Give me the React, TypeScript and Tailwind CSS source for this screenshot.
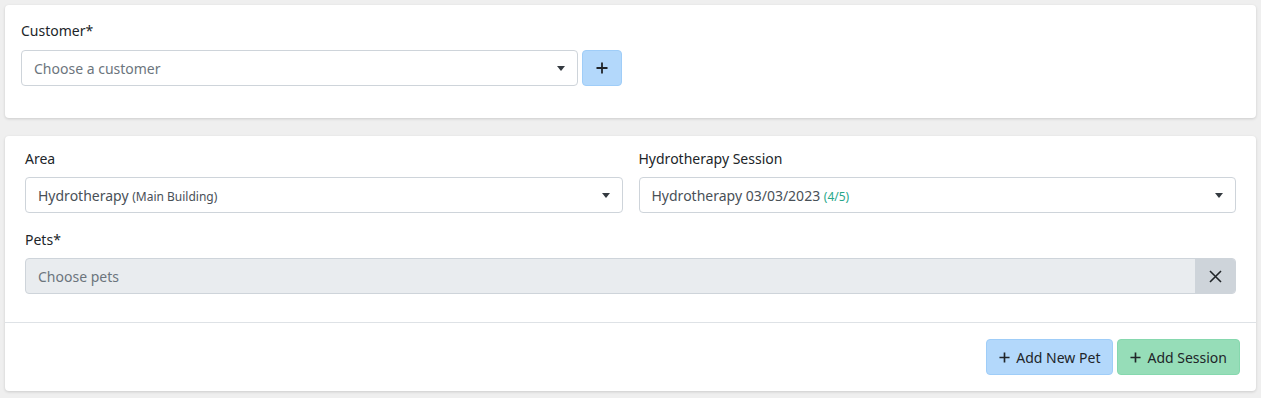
import React from 'react'

const Caret = () => (
    <svg width="8" height="5" viewBox="0 0 8 5" className="shrink-0">
        <path d="M0 0h8L4 5z" fill="#343a40" />
    </svg>
)

const Plus = ({ size = 12 }: { size?: number }) => (
    <svg width={size} height={size} viewBox="0 0 12 12" className="shrink-0">
        <path d="M6 0.5v11M0.5 6h11" stroke="#212529" strokeWidth="1.8" />
    </svg>
)

const Select = ({ children }: { children: React.ReactNode }) => (
    <div className="flex h-9 w-full items-center justify-between rounded border border-[#ced4da] bg-white pl-3 pr-3 text-[14px] text-[#495057]">
        <span>{children}</span>
        <Caret />
    </div>
)

const App = () => {
    return (
        <div
            className="min-h-[398px] bg-[#efefef] px-[5px] pt-[5px] text-[#212529]"
            style={{ fontFamily: '"Noto Sans", "Open Sans", sans-serif' }}
        >
            {/* Customer card */}
            <div className="rounded bg-white px-4 pt-4 pb-8 shadow-[0_1px_3px_rgba(0,0,0,0.15)]">
                <label className="block text-[14px] leading-5">Customer*</label>
                <div className="mt-[9px] flex gap-1">
                    <div className="w-[557px]">
                        <div className="flex h-9 w-full items-center justify-between rounded border border-[#ced4da] bg-white px-3 text-[14px] text-[#6c757d]">
                            <span>Choose a customer</span>
                            <Caret />
                        </div>
                    </div>
                    <button className="flex h-9 w-10 items-center justify-center rounded border border-[#9fcdf8] bg-[#b3d8fb]">
                        <Plus size={12} />
                    </button>
                </div>
            </div>

            {/* Session card */}
            <div className="mt-[18px] rounded bg-white shadow-[0_1px_3px_rgba(0,0,0,0.15)]">
                <div className="px-5 pt-[13px] pb-7">
                    <div className="grid grid-cols-2 gap-4">
                        <div>
                            <label className="block text-[14px] leading-5">Area</label>
                            <div className="mt-2">
                                <Select>
                                    Hydrotherapy <span className="text-[12px]">(Main Building)</span>
                                </Select>
                            </div>
                        </div>
                        <div>
                            <label className="block text-[14px] leading-5">Hydrotherapy Session</label>
                            <div className="mt-2">
                                <Select>
                                    Hydrotherapy 03/03/2023{' '}
                                    <span className="text-[12px] text-[#28a78a]">(4/5)</span>
                                </Select>
                            </div>
                        </div>
                    </div>
                    <label className="mt-[17px] block text-[14px] leading-5">Pets*</label>
                    <div className="mt-2 flex h-9 overflow-hidden rounded border border-[#ced4da] bg-[#e9ecef]">
                        <div className="flex flex-1 items-center px-3 text-[14px] text-[#6c757d]">Choose pets</div>
                        <div className="flex w-10 items-center justify-center border-l border-[#ced4da] bg-[#ced4da]">
                            <svg width="13" height="13" viewBox="0 0 13 13">
                                <path d="M1 1l11 11M12 1L1 12" stroke="#212529" strokeWidth="1.6" />
                            </svg>
                        </div>
                    </div>
                </div>

                {/* Footer */}
                <div className="flex justify-end gap-1 border-t border-[#dee2e6] px-4 py-4">
                    <button className="flex h-9 items-center gap-[6px] rounded border border-[#9fcdf8] bg-[#b3d8fb] px-3 text-[14px] text-[#212529]">
                        <Plus size={11} />
                        Add New Pet
                    </button>
                    <button className="flex h-9 items-center gap-[6px] rounded border border-[#86d8ae] bg-[#96ddb8] px-3 text-[14px] text-[#212529]">
                        <Plus size={11} />
                        Add Session
                    </button>
                </div>
            </div>
        </div>
    )
}

export default App
